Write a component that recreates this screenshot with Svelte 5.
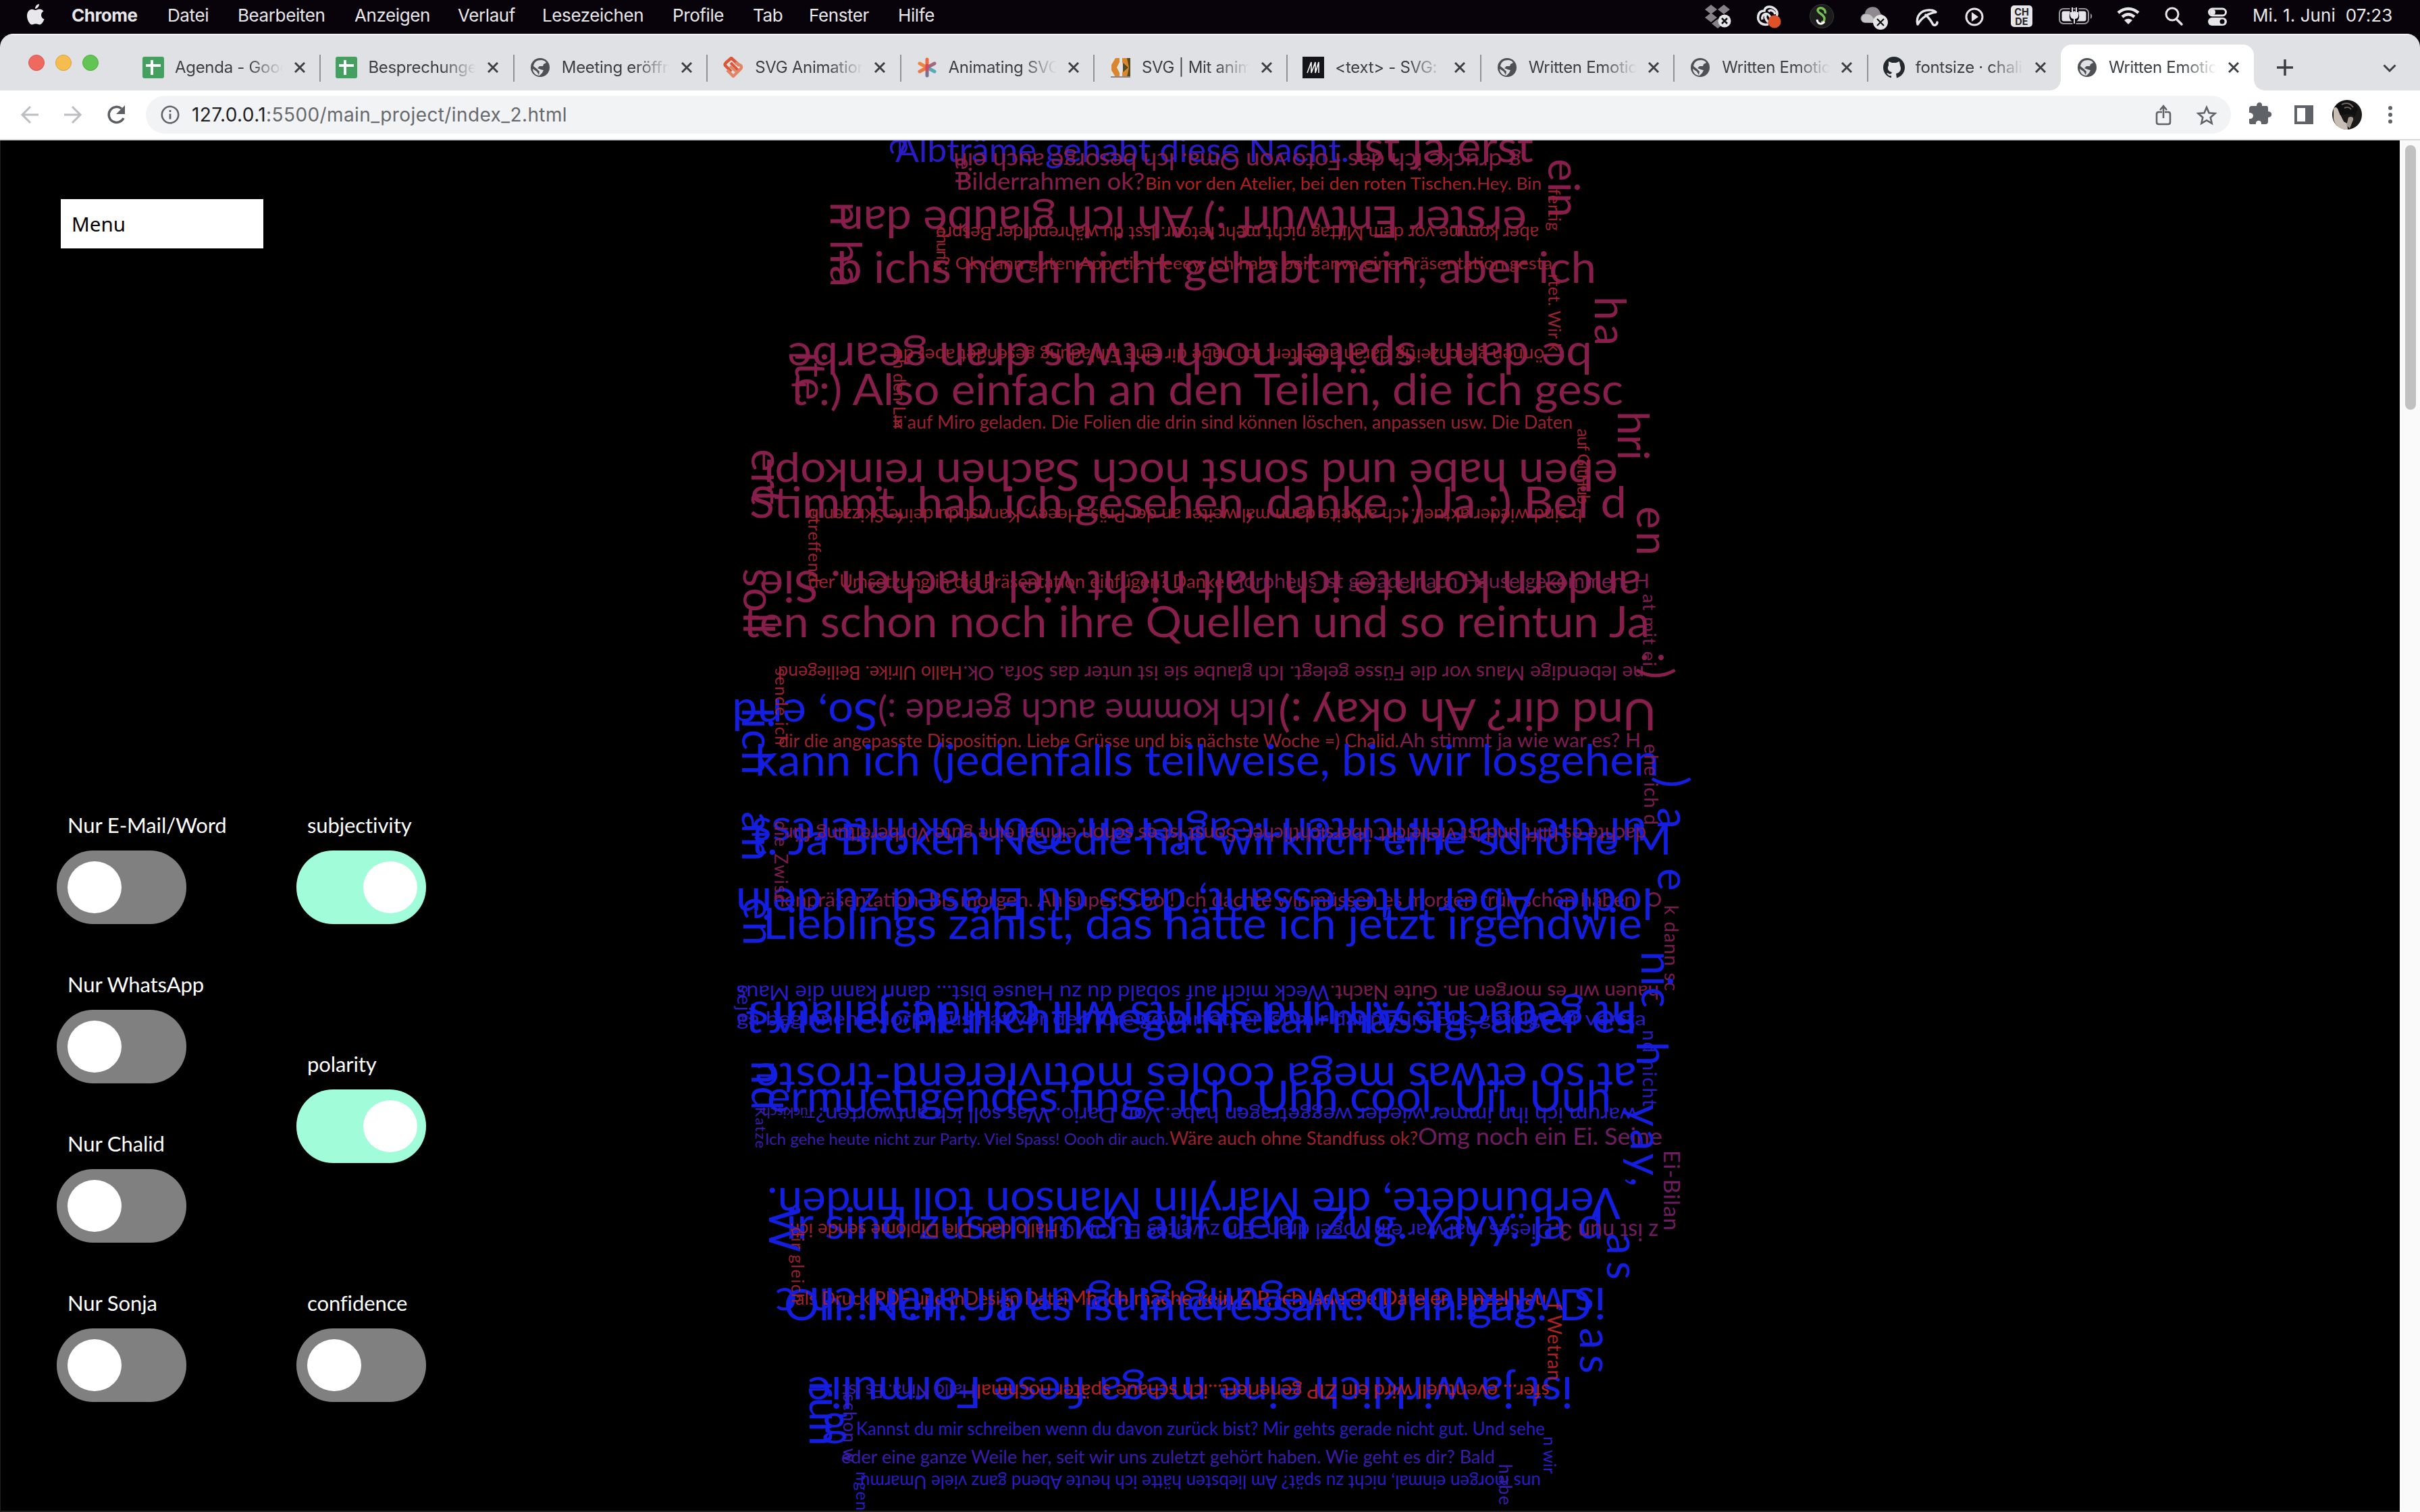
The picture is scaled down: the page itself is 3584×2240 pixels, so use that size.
<script>
  const BLUE = '#141ee0', MAG = '#871e4b', RED = '#b02022', WINE = '#9a2032';
  const PLUM = '#7c1c52', INDIGO = '#2a1cc4', VIOLET = '#3c1cae', GRAPE = '#701c62';

  const menus = ['Datei', 'Bearbeiten', 'Anzeigen', 'Verlauf', 'Lesezeichen', 'Profile', 'Tab', 'Fenster', 'Hilfe'];

  const tabs = [
    { icon: 'sheet', title: 'Agenda - Google' },
    { icon: 'sheet', title: 'Besprechungen' },
    { icon: 'globe', title: 'Meeting eröffnen' },
    { icon: 'orange', title: 'SVG Animation' },
    { icon: 'star', title: 'Animating SVG' },
    { icon: 'code', title: 'SVG | Mit anima' },
    { icon: 'mdn', title: '<text> - SVG: S' },
    { icon: 'globe', title: 'Written Emotion' },
    { icon: 'globe', title: 'Written Emotion' },
    { icon: 'github', title: 'fontsize · chali' },
    { icon: 'globe', title: 'Written Emotion', active: true }
  ];

  const sources = [
    { label: 'Nur E-Mail/Word', on: false },
    { label: 'Nur WhatsApp', on: false },
    { label: 'Nur Chalid', on: false },
    { label: 'Nur Sonja', on: false }
  ];
  const metrics = [
    { label: 'subjectivity', on: true },
    { label: 'polarity', on: true },
    { label: 'confidence', on: false }
  ];

  // Left-to-right runs: text, start x, end x, baseline, size, colour
  const across = [
    ['Albträme gehabt diese Nacht.', 1326, 1998, 240, 50, INDIGO],
    ['ist ja erst', 2004, 2271, 240, 64, MAG],
    ['Bilderrahmen ok?', 1416, 1695, 281, 35, MAG],
    ['Bin vor den Atelier, bei den roten Tischen.', 1696, 2186, 281, 25, RED],
    ['Hey. Bin', 2187, 2283, 281, 25, WINE],
    ['b ichs noch nicht gehabt nein, aber ich', 1239, 2364, 419, 64, MAG],
    ['g? Ok dann guten Appetit. Heeey. Ich habe bei canva eine Präsentation gesta', 1381, 2299, 399, 25, WINE],
    ['t :) Also einfach an den Teilen, die ich gesc', 1171, 2404, 600, 64, MAG],
    ['k auf Miro geladen. Die Folien die drin sind können löschen, anpassen usw. Die Daten', 1323, 2329, 635, 26, WINE],
    ['Stimmt, hab ich gesehen, danke :) Ja :) Bei d', 1110, 2409, 767, 64, MAG],
    ['der Umsetzung in die Präsentation einfügen? Danke', 1197, 1813, 871, 26, WINE],
    ['Morpheus ist gerade nach Hause gekommen. H', 1814, 2443, 871, 28, PLUM],
    ['ten schon noch ihre Quellen und so reintun Ja', 1101, 2443, 944, 64, MAG],
    ['dir die angepasste Disposition. Liebe Grüsse und bis nächste Woche =) Chalid.', 1153, 2072, 1107, 26, WINE],
    ['Ah stimmt ja wie war es? H', 2073, 2430, 1107, 29, PLUM],
    ['kann ich (jedenfalls teilweise, bis wir losgehen', 1118, 2457, 1149, 64, BLUE],
    ['t. Ja Broken Needle hat wirklich eine schöne M', 1112, 2476, 1266, 64, BLUE],
    ['henpräsentation. Bis morgen. Ah super! Cool! Ich dachte wir müssen es morgen früh schon haben. O', 1145, 2461, 1343, 28, PLUM],
    ['Lieblings zählst, das hätte ich jetzt irgendwie', 1130, 2432, 1391, 64, BLUE],
    ['t vielleicht nicht mega metal-mässig, aber es', 1104, 2423, 1530, 64, BLUE],
    ['ga beginnen. Morpheus hat vor der Türe gewartet, er ist mir dann zum Bus gefolgt. er versta', 1091, 2438, 1519, 28, INDIGO],
    ['ermuetigendes finge ich. Uhh cool. Uii. Uuh', 1136, 2386, 1647, 64, BLUE],
    ['Ich gehe heute nicht zur Party. Viel Spass! Oooh dir auch.', 1133, 1731, 1696, 23, VIOLET],
    ['Wäre auch ohne Standfuss ok?', 1732, 2100, 1696, 27, WINE],
    ['Omg noch ein Ei. Seine', 2100, 2462, 1696, 34, GRAPE],
    ['ir sind zusammen auf dem Zug. Yayy. ja d', 1164, 2375, 1835, 64, BLUE],
    ['Oh. Nein. Ja es ist interessant. Uhh gag. D', 1161, 2358, 1956, 64, BLUE],
    ['als Druck PDF und InDesign Datei', 1178, 1581, 1933, 27, WINE],
    ['Mh ich mache kein ZIP, ich lade die Dateien einzeln au', 1581, 2290, 1933, 29, RED],
    ['g', 1217, 1256, 2127, 64, BLUE],
    ['Kannst du mir schreiben wenn du davon zurück bist? Mir gehts gerade nicht gut. Und sehe', 1268, 2288, 2126, 26, INDIGO],
    ['eder eine ganze Weile her, seit wir uns zuletzt gehört haben. Wie geht es dir? Bald', 1246, 2214, 2168, 26, VIOLET]
  ];

  // Upside-down runs: text, right edge, left edge, baseline, size, colour
  const flipped = [
    ['g drucke ich das Foto von Oma. Ich besorge auch ein', 2253, 1412, 227, 35, MAG],
    ['erster Entwurf :) Ah ich glaube dan', 2261, 1241, 306, 64, MAG],
    ['aber komme vor dem Mittag nicht mehr retour. Isst du während der Bespre', 2279, 1386, 336, 26, WINE],
    ['be dann später noch etwas dran gearbe', 2358, 1166, 508, 64, MAG],
    ['önnen gleichzeitig daran arbeiten. Ich habe dir eine Einladung gesendet aber du', 2287, 1322, 517, 26, WINE],
    ['eben habe und sonst noch Sachen reinkopi', 2396, 1131, 681, 64, MAG],
    ['b sind wieder aktuell. Ich arbeite dann mal weiter an der Präs. Heeey. Kannst du deine Skizzen b', 2343, 1197, 754, 26, WINE],
    ['andern konnte ich halt nicht viel machen. Sie', 2430, 1125, 846, 64, MAG],
    ['ne lebendige Maus vor die Füsse gelegt. Ich glaube sie ist unter das Sofa. Ok.', 2435, 1426, 987, 29, PLUM],
    ['Hallo Ulrike. Beiliegend', 1425, 1152, 987, 26, WINE],
    ['Und dir? Ah okay :)', 2453, 1893, 1036, 64, MAG],
    ['Ich komme auch gerade :)', 1889, 1300, 1036, 52, PLUM],
    ['So, end', 1300, 1084, 1036, 64, BLUE],
    ['uf die Nachrichten reagieren. Ooh ok interess', 2439, 1114, 1212, 64, BLUE],
    ['dachte es hilft und ist vielleicht übersichtlicher. Sonst ist es schon einmal eine gute Vorbereitung für', 2438, 1164, 1226, 28, PLUM],
    ['lodie. Aber interessant, dass du Erased zu dein', 2448, 1090, 1316, 64, BLUE],
    ['hauen wir es morgen an. Gute Nacht.', 2457, 1970, 1460, 29, PLUM],
    ['Weck mich auf sobald du zu Hause bist... dann kann die Maus', 1969, 1091, 1460, 30, INDIGO],
    ['ht gedacht: Ah und spirits will collide: ja laufs', 2424, 1110, 1484, 64, BLUE],
    ['at so etwas mega cooles motivierend-tröste', 2423, 1118, 1575, 64, BLUE],
    ['warum ich ihn immer wieder weggetragen habe. Von Dario. Was soll ich antworten?', 2425, 1208, 1641, 30, INDIGO],
    ['Tückisch', 1207, 1129, 1641, 22, VIOLET],
    ['Verbündete, die Marylin Manson toll finden.', 2400, 1136, 1760, 64, BLUE],
    ['z ist nun 3.', 2456, 2302, 1813, 34, GRAPE],
    ['Dieses mal war ein Vogel dran. Ein zweites Ei. OMG', 2300, 1568, 1813, 30, INDIGO],
    ['Hallo dad. Die Diplome sende ich', 1567, 1169, 1813, 26, WINE],
    ['is wirklich bewegung ging und natürlich c', 2378, 1148, 1908, 64, BLUE],
    ['ist ja wirklich eine mega fiese Formulie', 2329, 1195, 2040, 64, BLUE],
    ['sfer... eventuell wird ein ZIP generiert...ich schaue später nochmal', 2295, 1446, 2051, 28, RED],
    ['Hallo Nina. Es ist', 1445, 1247, 2051, 26, VIOLET],
    ['uns morgen einmal, nicht zu spät? Am liebsten hätte ich heute Abend ganz viele Umarmu', 2282, 1274, 2186, 26, INDIGO]
  ];

  // Runs that read downwards: text, baseline x, top, bottom, size, colour
  const down = [
    ['e', 1318, 204, 232, 50, INDIGO],
    ['en', 1415, 233, 272, 35, MAG],
    ['ein', 2293, 235, 322, 64, MAG],
    ['fertig', 2293, 280, 342, 25, WINE],
    ['n ha', 1230, 299, 425, 64, MAG],
    ['chun', 1387, 337, 385, 25, WINE],
    ['rtet. Wir k', 2293, 406, 521, 25, WINE],
    ['ha', 2362, 439, 512, 64, MAG],
    ['ite', 1178, 521, 593, 64, MAG],
    ['ch den Lin', 1323, 520, 635, 25, WINE],
    ['hri', 2396, 609, 682, 64, MAG],
    ['auf GitHub', 2336, 635, 747, 25, WINE],
    ['ert', 1113, 665, 748, 64, MAG],
    ['etreffend', 1197, 753, 863, 25, WINE],
    ['en', 2424, 750, 823, 64, MAG],
    ['soll', 1101, 842, 939, 64, MAG],
    ['at mit ei', 2433, 880, 987, 27, PLUM],
    [':)', 2432, 966, 1006, 64, MAG],
    ['sende ich', 1148, 990, 1104, 25, WINE],
    ['lich', 1099, 1048, 1148, 64, BLUE],
    ['ehe ich d', 2435, 1102, 1222, 28, PLUM],
    [') a', 2455, 1150, 1228, 64, BLUE],
    ['an', 1099, 1202, 1276, 64, BLUE],
    ['die Zwisc', 1147, 1216, 1337, 26, PLUM],
    ['e', 2455, 1286, 1321, 64, BLUE],
    ['en', 1101, 1329, 1401, 64, BLUE],
    ['k dann sc', 2465, 1341, 1468, 28, PLUM],
    ['nic', 2431, 1409, 1493, 64, BLUE],
    ['sejé', 1092, 1459, 1515, 28, INDIGO],
    ['nd nicht', 2433, 1526, 1639, 28, INDIGO],
    ['h', 2424, 1543, 1578, 64, BLUE],
    ['nd', 1113, 1571, 1645, 64, BLUE],
    ['Katze', 1119, 1640, 1701, 22, VIOLET],
    ['yay,', 2415, 1636, 1758, 64, BLUE],
    ['Ei-Bilan', 2464, 1704, 1823, 33, GRAPE],
    ['W', 1139, 1789, 1848, 64, BLUE],
    ['dir gleich', 1172, 1818, 1930, 25, WINE],
    ['as', 2380, 1827, 1896, 64, BLUE],
    ['f Wetran', 2292, 1930, 2045, 28, RED],
    ['as', 2340, 1967, 2035, 64, BLUE],
    ['run', 1199, 2046, 2142, 64, BLUE],
    ['schon w', 1249, 2065, 2166, 26, VIOLET],
    ['n wir', 2286, 2128, 2183, 25, INDIGO],
    ['habe i', 2220, 2169, 2246, 26, VIOLET],
    ['ngen', 1268, 2180, 2238, 25, INDIGO]
  ];
</script>

{#snippet toggle(item)}
  <div class="field">
    <span class="label">{item.label}</span>
    <div class="switch" class:on={item.on}><i></i></div>
  </div>
{/snippet}

{#snippet favicon(name)}
  <svg class="fav" viewBox="0 0 32 32">
    {#if name === 'sheet'}
      <rect width="32" height="32" rx="3" fill="#43a05f" />
      <path d="M5 13h22M14 5v22" stroke="#fff" stroke-width="4" />
    {:else if name === 'globe'}
      <circle cx="16" cy="16" r="14" fill="#4e5055" />
      <path d="M17 5c4 0 6 1 8 4l-4 2-1 3h-5l-3 3 5 2 4 1-2 4-4 4c-6 0-10-5-10-10l6 4 3 5 1-5-4-4-5-4c1-6 5-9 11-9z" fill="#dfe1e5" />
    {:else if name === 'orange'}
      <path d="M13 22L4 13q-1-2 1-4l8-7 12 11" fill="none" stroke="#dc5738" stroke-width="4.500" stroke-linejoin="round" />
      <path d="M12 9l11 11" stroke="#dc5738" stroke-width="4" />
      <path d="M19 9l8 4q2 2 0 5L16 29l-9-9" fill="none" stroke="#e48467" stroke-width="4.500" stroke-linejoin="round" />
      <path d="M11 14l9 8" stroke="#e48467" stroke-width="3.500" />
    {:else if name === 'star'}
      <g stroke-width="5" stroke-linecap="round">
        <path d="M16 4v12" stroke="#ee6b3b" /><path d="M16 16v12" stroke="#7d7090" />
        <path d="M5 10l11 6" stroke="#f1843a" /><path d="M16 16l11 6" stroke="#56a9b5" />
        <path d="M16 16L5 22" stroke="#ee7843" /><path d="M27 10l-11 6" stroke="#a4667c" />
        <path d="M16 13v6" stroke="#d24a62" />
      </g>
    {:else if name === 'code'}
      <rect x="2" y="2" width="29" height="28" fill="#e4e4e4" />
      <path d="M9 2h6v6l-4 8 4 8v6H9L3 20v-8z" fill="#d9862e" />
      <path d="M19 2h12v28H19v-6l3-8-3-8z" fill="#d9862e" />
      <path d="M26 2h5v28h-5l3-14zM20 9l8 7-8 7z" fill="#55491f" />
      <path d="M2 30h29" stroke="#85888e" stroke-width="2" />
    {:else if name === 'mdn'}
      <rect width="32" height="32" fill="#15141a" />
      <path d="M7 24l6-16v16l6-16v16l5-16v16" fill="none" stroke="#fff" stroke-width="1.600" />
    {:else}
      <circle cx="16" cy="16" r="16" fill="#24292f" />
      <path d="M8 7l5 2h6l5-2 1 6c3 7-1 11-6 12l1 7h-8v-4c-4 1-5-1-7-4 3 0 4 3 7 1l1-2c-5-1-8-5-5-10z" fill="#e4e6ea" />
    {/if}
  </svg>
{/snippet}

<div class="screen">
  <header class="menubar">
    <svg class="apple" viewBox="0 0 28 34"><path d="M19 1c0 4-3 7-6 7 0-4 3-7 6-7zM13.500 10c2 0 3-1.500 6-1.500 3 0 5 1.500 6 3-5 3-4.500 10 1 12-1.500 4-4 8-7 8-2 0-3-1.200-5.500-1.200S10.500 31.500 8.500 31.500C4.500 31.500 1 24 1 18.500c0-6 3.500-9.800 7.500-9.800 2 0 3.500 1.300 5 1.300z" fill="#e8e7ea" /></svg>
    <b>Chrome</b>
    <nav>{#each menus as m}<span>{m}</span>{/each}</nav>
    <svg class="status" viewBox="120 0 800 50">
      <g fill="#848287"><path d="M137 14l9-7 9 7-9 7zM156 14l9-7 9 7-9 7zM137 26l9-7 9 7-9 7zM147 35l9-7 9 7-9 7z" /></g>
      <circle cx="166" cy="31" r="9.500" fill="#e6e5e8" /><path d="M162 27l8 8M170 27l-8 8" stroke="#111" stroke-width="2.500" />
      <g fill="none" stroke="#e6e5e8" stroke-width="3.500"><path d="M231 36c-10 2-17-4-15-13 1-5 5-7 9-7 1-6 8-8 14-4 5 3 6 8 4 13" /><path d="M229 20c-5 4-2 9 2 13M222 29c-2-9 9-12 12-3l2 4M231 17c4-4 9 0 10 4" /></g>
      <circle cx="240" cy="32" r="9.500" fill="#e05128" />
      <circle cx="310" cy="24" r="17.500" fill="#1c1c1c" stroke="#3a3a3a" />
      <path d="M315 20c2-8-10-11-11-5 0 5 10 6 10 13 0 4-3 5-5 5" fill="none" stroke="#76bf50" stroke-width="3.500" /><path d="M303 29c1 7 7 8 11 3" fill="none" stroke="#fff" stroke-width="3" />
      <path d="M374 34c-9-2-8-12 0-14 1-12 20-14 23 0 7 3 7 12 0 14z" fill="#8d8b90" /><path d="M372 33c-6-4-3-13 5-12 7 0 10 6 13 13z" fill="#c4c3c6" />
      <circle cx="397" cy="33" r="11" fill="#e6e5e8" /><path d="M392 28l10 10M402 28l-10 10" stroke="#111" stroke-width="2.200" />
      <g fill="none" stroke="#e6e5e8" stroke-width="3.500" stroke-linecap="round" stroke-linejoin="round"><path d="M452 36c-3-12 5-22 19-21 4 0 6 1 8 3-10 1-21 8-27 18z" /><path d="M464 22c5 5 8 9 10 13 2 4 7 2 7-2" /></g>
      <circle cx="536" cy="25" r="12" fill="none" stroke="#e6e5e8" stroke-width="3" /><path d="M532 18l10 7-10 7z" fill="#e6e5e8" />
      <rect x="590" y="8" width="32" height="32" rx="5" fill="#e6e5e8" /><text x="606" y="22.500" class="lang">CH</text><text x="606" y="37" class="lang">DE</text>
      <rect x="662" y="13" width="43" height="22" rx="6" fill="none" stroke="#99979c" stroke-width="2" /><path d="M708 20c3 2 3 6 0 8z" fill="#99979c" />
      <rect x="665.500" y="16.500" width="36" height="15" rx="3" fill="#e6e5e8" /><path d="M680 12v8c-2 7 1 10 4 10v6M688 12v8c2 7-1 10-4 10" fill="none" stroke="#08030b" stroke-width="5" /><path d="M680 11v7h-2c-1 7 2 10 5 10v7h2v-7c4 0 6-3 5-10h-2v-7h-2v7h-4v-7z" fill="#e6e5e8" />
      <g fill="none" stroke="#e6e5e8" stroke-width="4.500"><path d="M749 19c9-8 21-8 30 0M755 25c6-5 12-5 18 0" /></g><path d="M758 30c4-3 8-3 12 0l-6 6z" fill="#e6e5e8" />
      <circle cx="829" cy="21" r="9" fill="none" stroke="#e6e5e8" stroke-width="3" /><path d="M835 28l8 8" stroke="#e6e5e8" stroke-width="3.500" stroke-linecap="round" />
      <rect x="883.500" y="13" width="25" height="10" rx="5" fill="none" stroke="#e6e5e8" stroke-width="3" /><circle cx="889" cy="18" r="4" fill="#e6e5e8" /><rect x="882" y="26" width="28" height="12" rx="6" fill="#e6e5e8" /><circle cx="903" cy="32" r="3.500" fill="#08030b" />
    </svg>
    <span class="clock">Mi. 1. Juni&nbsp; 07:23</span>
  </header>

  <main class="window">
    <div class="tabstrip">
      <div class="lights"><i class="r"></i><i class="y"></i><i class="g"></i></div>
      {#each tabs as tab, i}
        <div class="tab" class:active={tab.active} class:sep={i < 9}>
          {@render favicon(tab.icon)}
          <span class="title">{tab.title}</span>
          <svg class="close" viewBox="0 0 16 16"><path d="M1 1l14 14M15 1L1 15" stroke="#3c4043" stroke-width="3" /></svg>
        </div>
      {/each}
      <svg class="plus" viewBox="0 0 24 24"><path d="M12 0v24M0 12h24" stroke="#3c4043" stroke-width="3.500" /></svg>
      <svg class="chev" viewBox="0 0 20 12"><path d="M1.500 1.500L10 10l8.500-8.500" fill="none" stroke="#3c4043" stroke-width="3" /></svg>
    </div>

    <div class="toolbar">
      <svg class="nav" viewBox="0 0 200 72" fill="none" stroke-width="3">
        <path d="M57 36H33M45 24L33 36l12 12M95 36h24M107 24l12 12-12 12" stroke="#bbbdc0" />
        <path d="M183 41a11.500 11.500 0 1 1-3-14" stroke="#5b5e63" stroke-width="3.500" /><path d="M185 22v13h-13z" fill="#5b5e63" />
      </svg>
      <div class="omnibox">
        <svg class="info" viewBox="0 0 28 28"><circle cx="14" cy="14" r="12.200" fill="none" stroke="#5f6368" stroke-width="2.600" /><path d="M14 12.500v8M14 7v3" stroke="#5f6368" stroke-width="2.800" /></svg>
        <span class="url"><em>127.0.0.1</em>:5500/main_project/index_2.html</span>
        <svg class="actions" viewBox="0 0 100 56" fill="none" stroke="#5f6368" stroke-width="2.600">
          <path d="M13 24H8q-3 0-3 3v12q0 3 3 3h14q3 0 3-3V27q0-3-3-3h-5M15 33V16M10 21l5-6 5 6" />
          <path d="M79 17l3.500 8.200 9 .8-6.800 6 2 8.800-7.700-4.600-7.700 4.600 2-8.800-6.800-6 9-.8z" />
        </svg>
      </div>
      <svg class="tools" viewBox="0 0 280 72">
        <path d="M43 25h-7c1-7-8-7-8 0h-7q-4 0-4 4v6c8-1 8 10 0 9v6q0 2 3 2h7c-1-7 9-7 8 0h6q4 0 4-4v-6c7 0 7-9 0-9v-4q0-4-2-4z" fill="#5f6368" transform="translate(10 -2)" />
        <path d="M94 22h28v28H94zM98 26v20h12V26z" fill="#5f6368" fill-rule="evenodd" />
        <circle cx="172" cy="36" r="22" fill="#1c1a19" /><path d="M152 27c3-3 6-3 9-1l2 12 4 8 5 3 1 9c-10 1-19-6-21-16z" fill="#c9beb6" /><path d="M155 24c8-12 26-10 33 3l-5 12-3-3-8-1-10 2-4-10z" fill="#100f0f" /><path d="M164 21c6-4 13-2 17 4M168 26c4-2 8-1 10 2" fill="none" stroke="#6f6862" stroke-width="2" /><path d="M174 40c6-3 9 1 6 6l-4 10-5-4z" fill="#a2978f" />
        <g fill="#5f6368"><circle cx="236" cy="26" r="3" /><circle cx="236" cy="36" r="3" /><circle cx="236" cy="46" r="3" /></g>
      </svg>
    </div>

    <div class="page">
      <section class="controls">
        <div class="menu">Menu</div>
        <div class="columns">
          <div class="col">{#each sources as s}{@render toggle(s)}{/each}</div>
          <div class="col">{#each metrics as s}{@render toggle(s)}{/each}</div>
        </div>
      </section>
      <svg class="art" viewBox="0 208 3554 2032">
        {#each across as [t, x, end, y, size, color]}
          <text {x} {y} textLength={end - x} lengthAdjust="spacingAndGlyphs" font-size={size} fill={color}>{t}</text>
        {/each}
        {#each flipped as [t, x, end, y, size, color]}
          <text transform="translate({x} {y}) rotate(180)" textLength={x - end} lengthAdjust="spacingAndGlyphs" font-size={size} fill={color}>{t}</text>
        {/each}
        {#each down as [t, x, y, end, size, color]}
          <text transform="translate({x} {y}) rotate(90)" textLength={end - y} lengthAdjust="spacing" font-size={size} fill={color}>{t}</text>
        {/each}
      </svg>
      <div class="scroll"><i></i></div>
    </div>
  </main>
</div>

<style>
  :global(body) { margin: 0; background: #08030b; }
  .screen { width: 3584px; height: 2240px; display: flex; flex-direction: column; background: #08030b; font-family: Inter, "Liberation Sans", sans-serif; overflow: hidden; }
  svg { display: block; flex: none; }
  .menubar { height: 50px; flex: none; display: flex; align-items: center; color: #e8e7ea; font-size: 26px; line-height: 46px; padding: 0 38px 0 39px; box-sizing: border-box; white-space: nowrap; }
  .menubar > b, .menubar nav, .clock { height: 50px; }
  .apple { width: 28px; height: 34px; margin-top: -7px; }
  .menubar b { margin-left: 39px; width: 142px; font-weight: 700; letter-spacing: -0.5px; }
  nav { display: grid; grid-template-columns: 104px 173px 153px 125px 193px 119px 83px 132px 80px; width: 1162px; letter-spacing: -0.4px; flex: none; }
  .status { width: 800px; height: 50px; margin-left: auto; }
  .lang { font-size: 14.500px; font-weight: 700; text-anchor: middle; fill: #222; }
  .clock { width: 210px; margin-left: 28px; letter-spacing: 0.1px; flex: none; }

  .window { flex: 1; display: flex; flex-direction: column; border-radius: 20px 20px 0 0; overflow: hidden; background: #dfe1e5; min-height: 0; }
  .tabstrip { height: 84px; box-sizing: border-box; padding-top: 14px; display: flex; flex: none; border-top: 2px solid #f2f3f5; }
  .lights { width: 188px; box-sizing: border-box; padding: 15px 0 0 42px; display: flex; gap: 16px; flex: none; }
  .lights i { width: 24px; height: 24px; border-radius: 50%; box-sizing: border-box; }
  .r { background: #ee6a5f; border: 1px solid #d9564c; }
  .y { background: #f5bd4f; border: 1px solid #dca23b; }
  .g { background: #61c454; border: 1px solid #4dad40; }
  .tab { position: relative; width: 286.400px; height: 68px; flex: none; display: flex; align-items: center; padding-left: 23px; box-sizing: border-box; color: #3c4043; }
  .tab.sep::after { content: ''; position: absolute; right: -1px; top: 15px; width: 2px; height: 40px; background: #8e9196; }
  .tab.active { background: #fff; border-radius: 16px 16px 0 0; }
  .tab.active::before, .tab.active::after { content: ''; position: absolute; bottom: 0; width: 16px; height: 16px; }
  .tab.active::before { left: -16px; background: radial-gradient(circle at 0 0, transparent 15.500px, #fff 16px); }
  .tab.active::after { right: -16px; background: radial-gradient(circle at 100% 0, transparent 15.500px, #fff 16px); }
  .fav { width: 32px; height: 32px; }
  .title { margin-left: 16px; width: 160px; overflow: hidden; white-space: nowrap; font-size: 24px; line-height: 32px; letter-spacing: -0.3px; -webkit-mask-image: linear-gradient(90deg, #000 68%, transparent); mask-image: linear-gradient(90deg, #000 68%, transparent); }
  .close { width: 16px; height: 16px; margin-left: 17px; }
  .plus { width: 24px; height: 24px; margin: 22px 0 0 33.600px; }
  .chev { width: 20px; height: 12px; margin: 29px 0 0 133px; }

  .toolbar { height: 74px; box-sizing: border-box; background: #fff; border-bottom: 2px solid #d6d8db; display: flex; align-items: center; flex: none; }
  .nav { width: 200px; height: 72px; }
  .omnibox { margin-left: 16px; width: 3088px; height: 56px; border-radius: 28px; background: #f1f3f4; display: flex; align-items: center; box-sizing: border-box; padding-left: 22px; flex: none; }
  .info { width: 28px; height: 28px; }
  .url { margin-left: 18px; font-size: 28px; color: #67696d; letter-spacing: 0.4px; white-space: nowrap; flex: 1; }
  .url em { font-style: normal; color: #202124; }
  .actions { width: 100px; height: 56px; margin-right: 15px; }
  .tools { width: 280px; height: 72px; }

  .page { position: relative; height: 2032px; flex: none; background: #000; display: flex; box-shadow: inset 1px -2px 0 #202020; font-family: Lato, sans-serif; }
  .controls { width: 3554px; box-sizing: border-box; padding: 87px 0 0 84px; }
  .menu { margin-left: 6px; width: 300px; height: 73px; box-sizing: border-box; padding-left: 16px; background: #fff; color: #000; font: 29.500px/73px "Noto Sans", sans-serif; }
  .columns { display: flex; margin-top: 834px; }
  .col { width: 355px; height: 875px; display: flex; flex-direction: column; justify-content: space-between; }
  .field { display: flex; flex-direction: column; gap: 18px; }
  .label { padding-left: 16px; color: #fff; font-size: 31px; line-height: 40px; height: 40px; white-space: nowrap; letter-spacing: -0.1px; }
  .switch { width: 192px; height: 109px; border-radius: 54px; background: #808080; padding: 16px; box-sizing: border-box; display: flex; }
  .switch i { width: 80px; height: 77px; border-radius: 50%; background: #fff; }
  .switch.on { background: #a0fcd9; padding-right: 13px; justify-content: flex-end; }
  .art { position: absolute; left: 0; top: 0; width: 3554px; height: 2032px; overflow: hidden; }
  .scroll { width: 30px; background: #fafafa; box-sizing: border-box; padding: 7px 0 0 8px; }
  .scroll i { display: block; width: 16px; height: 392px; border-radius: 8px; background: #c1c1c1; }
</style>
